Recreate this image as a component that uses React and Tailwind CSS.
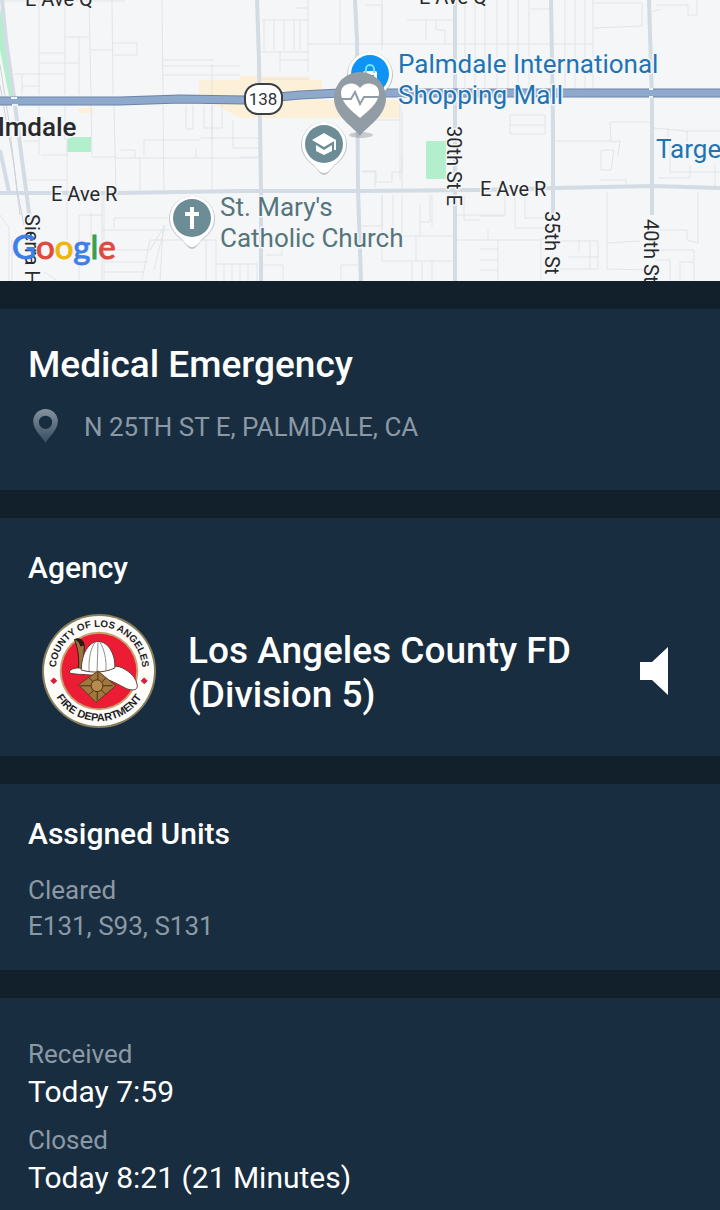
const MINOR_ROADS = [
  // north west
  "M0 1H125 M39 1V95 M65 1V95 M89 0L91 95 M112 0L113 95 M162 0L163 95 M39 53H65 M40 63H79 M79 38V95 M65 37H89 M91 50H112 M113 43H137V55H113 M14 74H65 M22 74V95 M22 86H39",
  "M163 60H214 M163 66H240 M163 75H240 M212 64V140",
  // south of the highway, west
  "M39 105V155 M65 105V140 M91 105L92 155 M114 105L116 193 M163 105L164 193 M186 105V129H193V105 M204 105V128H222V105 M144 140H200 M144 140V155 M200 138H240 M233 120V148H260 M212 105V193",
  "M24 141H39 M41 155H67 M67 140V193 M91 157H116 M116 158H196 M140 158V193 M120 150H135V158 M196 148V158H260 M24 180H67",
  // below Avenue R
  "M67 195V240 M79 280V215H102 M102 195V280 M91 213V240 M102 230H170 M114 228V218H168 M104 250H150L165 225 M104 262H148 M104 272H143 M150 240L142 280 M150 240H216 M165 225L154 270 M163 230L160 280 M0 215L9 228V281 M12 240V281 M44 272L56 280 M104 195V281",
  "M206 240V281 M216 240V281 M224 264V281 M232 264V281 M216 264H257 M240 264V281 M248 264V281 M257 262V281",
  // middle blocks
  "M262 20H308 M264 20V50 M274 20V50 M284 20V50 M294 20V50 M300 20V50 M262 52H308 M280 52V71 M280 60H308 M308 0V72 M340 0V44 M262 79H308 M308 44H456 M296 8H308 M366 5H382V44 M382 0V50 M407 20H454 M426 20V40 M436 20V30H445V44 M362 120H400 M400 105V180 M362 172H375V188 M402 110V190",
  "M262 138H240 M262 157H240 M362 171H376V182H392V172H402V158 M362 226H382V195 M382 195V261 M402 195V240 M393 195V240 M420 205V235 M430 195V222H420 M432 195V226 M382 236H454 M382 261H454 M412 262V281 M422 262V281 M432 262V281 M266 255H282V240 M262 265H283V281 M341 281V265H361 M416 237V261 M464 195V220H480",
  // east blocks
  "M465 0V90 M475 0V90 M485 0V90 M497 0V90 M508 0V90 M518 0V90 M529 0V90 M456 44H593 M565 0V90 M575 0V90 M585 0V90 M593 0V90 M593 3H642V26L594 28 M531 9H551 M656 5H688V15H697V0 M652 12L660 9",
  "M510 115H545V134H510V115 M510 125H545 M610 122H649 M610 122L611 142L620 141L618 155 M554 141H610 M654 128L685 131H720 M668 128V142 M687 131V142 M602 150H614L611 170H601V150 M600 180H626V188 M658 178H690V165 M670 142V172H720 M715 165V188",
  "M457 215H505V195 M505 216H480 M515 195V228H550 M525 195V218H551 M457 240H540L550 235 M488 230V240 M498 240V281 M480 249H498 M480 260H498 M480 270H498 M541 240V281 M607 192V269L650 270 M607 243L640 241 M698 192V243L687 240V230H660 M557 241H598V269H560 M579 240V251 M568 257H598 M590 241V269 M655 250H694V281 M680 281V262H694 M670 260V281 M655 260H670",
];

const ARTERIALS = [
  "M257 0L259 60L261 190V281",
  "M355 0L357 40L358 190L361 281",
  "M455 0V281",
  "M551 0L553 120V215",
  "M649 0L652 100V215",
  "M0 193H120L240 191L360 191L478 190L555 188L652 186L720 188",
];

const HIGHWAY = "M-5 101H60L120 101L180 99L245 100L300 95L340 93H725";

function MapLabel({ children, className = "", ...props }) {
  return (
    <text
      className={`[paint-order:stroke] stroke-[#f5f6f7] stroke-[3px] [stroke-linejoin:round] ${className}`}
      {...props}
    >
      {children}
    </text>
  );
}

// White teardrop with a coloured disc, tip at (0, 29)
function PlaceMarker({ x, y, color, children }) {
  return (
    <g transform={`translate(${x} ${y})`}>
      <path
        d="M0 30C-3 30-6 26-10 21C-17 16-23 9-23 0A23 23 0 0 1 23 0C23 9 17 16 10 21C6 26 3 30 0 30Z"
        className="fill-[#8d979c]/50"
        transform="translate(0 1)"
      />
      <path d="M0 29C-4 29-7 25-10 21C-17 16-22 9-22 0A22 22 0 0 1 22 0C22 9 17 16 10 21C7 25 4 29 0 29Z" fill="#ffffff" />
      <circle r="19" fill={color} />
      {children}
    </g>
  );
}

function IncidentMap() {
  return (
    <svg
      viewBox="0 0 720 281"
      preserveAspectRatio="xMidYMid slice"
      className="block w-full bg-[#f5f6f7]"
      role="img"
      aria-label="Map of the incident area"
    >
      <g fill="#fdf0d9">
        <path d="M199 80H322V118H240L199 96Z" />
        <path d="M240 76H310V88H240Z" />
        <path d="M78 108H93V113H78Z" />
        <path d="M280 100H400V118H280Z" />
      </g>
      <g fill="#b3efcd">
        <path d="M-1 5L3 20L14 96H9L0 50Z" />
        <path d="M67 139L72 137H91V152H67Z" />
        <path d="M426 141H446V179H426Z" />
      </g>

      <g fill="none" stroke="#e1e4e9" strokeWidth="1">
        {MINOR_ROADS.map((d) => (
          <path key={d} d={d} />
        ))}
      </g>
      <g fill="none" stroke="#d3dce4" strokeWidth="4">
        {ARTERIALS.map((d) => (
          <path key={d} d={d} />
        ))}
        <path d="M2 0L6 40L14 97L22 160L30 220" />
        <path d="M0 150L9 192" />
      </g>
      <path d="M0 65L8 115L17 190L24 225 M0 85L14 165L20 215" fill="none" stroke="#ccd3dc" strokeWidth="1" />

      <path d={HIGHWAY} fill="none" stroke="#6a83a6" strokeWidth="9" />
      <path d={HIGHWAY} fill="none" stroke="#8fa9cc" strokeWidth="7" />
      <path d="M11 98H17 M12 105H18 M649 89H653 M649 97H653" stroke="#eef2f6" strokeWidth="2" />

      <g fontFamily="Roboto, sans-serif" fontSize="20" fill="#27292c">
        <MapLabel x="25" y="6">E Ave Q</MapLabel>
        <MapLabel x="419" y="4">E Ave Q</MapLabel>
        <MapLabel x="51" y="201">E Ave R</MapLabel>
        <MapLabel x="480" y="196">E Ave R</MapLabel>
        <MapLabel x="-2" y="136" fontSize="26" fontWeight="500">lmdale</MapLabel>
        <MapLabel transform="translate(447 126) rotate(90)">30th St E</MapLabel>
        <MapLabel transform="translate(545 211) rotate(90)">35th St</MapLabel>
        <MapLabel transform="translate(644 219) rotate(90)">40th St</MapLabel>
        <MapLabel transform="translate(25 214) rotate(90)">Sierra Hwy</MapLabel>
      </g>

      <g fontFamily="Roboto, sans-serif" fontSize="26" fill="#54757c">
        <MapLabel x="220" y="216">St. Mary&apos;s</MapLabel>
        <MapLabel x="220" y="247">Catholic Church</MapLabel>
      </g>
      <g fontFamily="Roboto, sans-serif" fontSize="26" fill="#1e74b4">
        <MapLabel x="398" y="73">Palmdale International</MapLabel>
        <MapLabel x="398" y="104">Shopping Mall</MapLabel>
        <MapLabel x="656" y="158">Target</MapLabel>
      </g>

      {/* route shield */}
      <rect x="245" y="84" width="37" height="30" rx="13" fill="#ffffff" stroke="#3c4043" strokeWidth="2" />
      <text x="263" y="105" textAnchor="middle" fontFamily="Roboto, sans-serif" fontSize="17" fill="#303336">
        138
      </text>

      <PlaceMarker x={370} y={74} color="#0f93f5">
        <rect x="-7" y="-3" width="14" height="12" rx="2" fill="#ffffff" />
        <path d="M-4 -1V-5A4 4 0 0 1 4 -5V-1" fill="none" stroke="#6fe4ef" strokeWidth="2" />
        <path d="M-3 1A3 3 0 0 0 3 1" fill="none" stroke="#0f93f5" strokeWidth="2" />
      </PlaceMarker>
      <PlaceMarker x={324} y={144} color="#6d8d96">
        <path d="M-12 -4L0 -11L12 -4L0 3Z" fill="#ffffff" />
        <path d="M-8 1L0 6L8 1V7L0 11L-8 7Z" fill="#ffffff" />
        <path d="M11 -4V6" stroke="#ffffff" strokeWidth="2" />
      </PlaceMarker>
      <PlaceMarker x={192} y={218} color="#6d8d96">
        <path d="M-2 -11H2V-6H7V-2H2V11H-2V-2H-7V-6H-2Z" fill="#ffffff" />
      </PlaceMarker>

      {/* incident pin */}
      <ellipse cx="361" cy="135" rx="12" ry="3" fill="#5f666b" opacity="0.3" />
      <path d="M360 136C354 127 334 117 334 98A26 26 0 0 1 386 98C386 117 366 127 360 136Z" fill="#929ca5" />
      <path
        d="M360 118C353 112 341 103 341 93C341 83 354 80 360 88C366 80 379 83 379 93C379 103 367 112 360 118Z"
        fill="#ffffff"
      />
      <path d="M340 99H351L355 92L360 104L364 97H380" fill="none" stroke="#929ca5" strokeWidth="2" />

      <text x="12" y="259" fontFamily="Lato, sans-serif" fontSize="33" strokeWidth="1">
        <tspan fill="#3f7fe8" stroke="#3f7fe8">G</tspan>
        <tspan fill="#de4a3f" stroke="#de4a3f">o</tspan>
        <tspan fill="#eeb50a" stroke="#eeb50a">o</tspan>
        <tspan fill="#3f7fe8" stroke="#3f7fe8">g</tspan>
        <tspan fill="#34a04e" stroke="#34a04e">l</tspan>
        <tspan fill="#de4a3f" stroke="#de4a3f">e</tspan>
      </text>
    </svg>
  );
}

function LocationPin() {
  return (
    <svg viewBox="-4 0 37 38" className="size-9 shrink-0" aria-hidden="true">
      <defs>
        <linearGradient id="pin" x1="0" y1="0" x2="0" y2="1">
          <stop offset="0" stopColor="#8592a0" />
          <stop offset="1" stopColor="#364c60" />
        </linearGradient>
      </defs>
      <path
        fillRule="evenodd"
        fill="url(#pin)"
        d="M14 36C12 31 1 23 1 13A13 13 0 0 1 27 13C27 23 16 31 14 36ZM14 7A7 7 0 1 0 14 21A7 7 0 1 0 14 7Z"
      />
    </svg>
  );
}

function AgencySeal() {
  return (
    <svg viewBox="0 0 116 116" className="size-[114px] shrink-0" role="img" aria-label="County of Los Angeles Fire Department seal">
      <defs>
        <path id="seal-top" d="M17 73A44 44 0 1 1 99 73" />
        <path id="seal-bottom" d="M7 58A51 51 0 0 0 109 58" />
      </defs>
      <circle cx="58" cy="58" r="58" fill="#8a7f5c" />
      <circle cx="58" cy="58" r="56" fill="#fdfcf8" />
      <circle cx="58" cy="58" r="40" fill="#c9a070" />
      <circle cx="58" cy="58" r="38" fill="#ec1c35" />
      <g fontFamily="Liberation Sans, Arial, sans-serif" fontWeight="700" fill="#1d1d1f" textAnchor="middle">
        <text fontSize="10">
          <textPath href="#seal-top" startOffset="50%">COUNTY OF LOS ANGELES</textPath>
        </text>
        <text fontSize="11">
          <textPath href="#seal-bottom" startOffset="50%">FIRE DEPARTMENT</textPath>
        </text>
      </g>
      <path d="M12 65L15 68L12 71L9 68ZM104 65L107 68L104 71L101 68Z" fill="#d4213b" stroke="#d4213b" />

      {/* helmet */}
      <path d="M33 26C38 24 43 27 43 33L42 58L37 57C38 46 37 36 33 26Z" fill="#9b7440" stroke="#2a1c12" strokeWidth="1" />
      <path d="M33 26C38 23 43 26 43 32L39 33C38 29 36 27 33 26Z" fill="#2a1c12" />
      <path
        d="M28 58C32 54 39 54 45 57C60 54 76 51 82 55C90 59 96 65 97 73C97 78 92 78 86 76C78 72 68 66 56 63C46 61 34 62 28 60Z"
        fill="#ffffff"
        stroke="#5b3a30"
        strokeWidth="1"
      />
      <path d="M40 57C40 40 48 28 57 28C68 28 75 42 74 55C63 60 50 60 40 57Z" fill="#ffffff" stroke="#5b3a30" strokeWidth="1" />
      <path d="M48 58C47 45 50 34 54 29 M56 59L57 29 M65 58C66 46 63 35 59 29" fill="none" stroke="#8f8a88" strokeWidth="1" />
      <path d="M57 58L75 73L55 90L37 72Z" fill="#a0773c" stroke="#5a3c1c" strokeWidth="1" />
      <path d="M39 73H72 M57 59L56 88 M48 65L65 82 M65 65L48 82" stroke="#4a3016" strokeWidth="1" />
      <circle cx="56" cy="73" r="6" fill="#b78b4b" stroke="#4a3016" strokeWidth="1" />
    </svg>
  );
}

function SpeakerIcon() {
  return (
    <svg viewBox="0 0 28 48" className="h-12 w-7" aria-hidden="true">
      <path d="M0 15H12L28 0V48L12 33H0Z" fill="#ffffff" />
    </svg>
  );
}

function Section({ children, className = "" }) {
  return <section className={`bg-[#182d3f] px-7 ${className}`}>{children}</section>;
}

export default function App() {
  return (
    <main className="flex w-full flex-col gap-7 bg-[#12202c] font-[Roboto,sans-serif] text-white">
      <IncidentMap />

      <Section className="pt-8 pb-[45px]">
        <h1 className="text-[37px] leading-12 font-medium">Medical Emergency</h1>
        <div className="mt-5 flex items-center gap-5">
          <LocationPin />
          <p className="text-[26px] leading-9 text-[#8b99a6]">N 25TH ST E, PALMDALE, CA</p>
        </div>
      </Section>

      <Section className="pt-8 pb-7">
        <h2 className="text-[30px] leading-9 font-medium">Agency</h2>
        <div className="mt-7 flex items-center pr-6 pl-3.5">
          <AgencySeal />
          <p className="ml-8 flex-1 pt-1 text-[37px] leading-11 font-medium">
            Los Angeles County FD
            <br />
            (Division 5)
          </p>
          <button type="button" aria-label="Listen to agency audio" className="cursor-pointer">
            <SpeakerIcon />
          </button>
        </div>
      </Section>

      <Section className="pt-8 pb-6.5">
        <h2 className="text-[30px] leading-9 font-medium">Assigned Units</h2>
        <p className="mt-5 text-[26px] leading-9 text-[#8b99a6]">Cleared</p>
        <p className="text-[26px] leading-9 text-[#8b99a6]">E131, S93, S131</p>
      </Section>

      <Section className="pt-9.5 pb-3">
        <dl>
          <dt className="text-[26px] leading-9 text-[#8b99a6]">Received</dt>
          <dd className="text-[30px] leading-10">Today 7:59</dd>
          <dt className="mt-2.5 text-[26px] leading-9 text-[#8b99a6]">Closed</dt>
          <dd className="text-[30px] leading-10">Today 8:21 (21 Minutes)</dd>
        </dl>
      </Section>
    </main>
  );
}
